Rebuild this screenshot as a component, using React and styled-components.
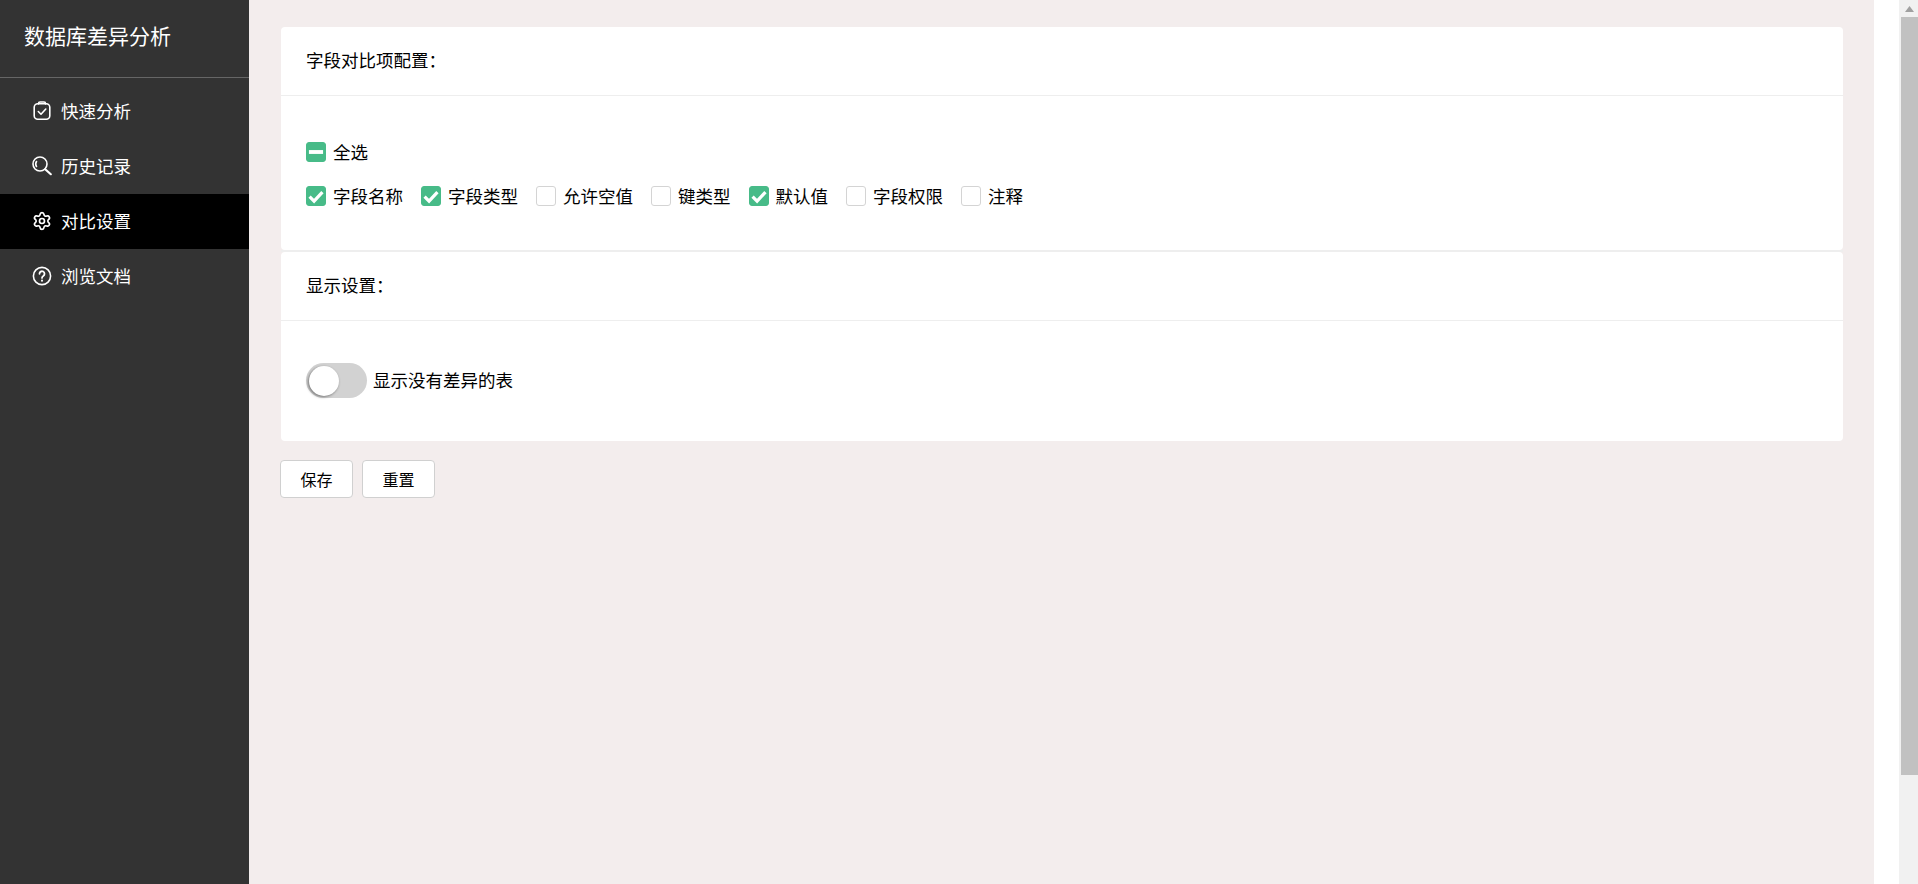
import React from 'react';
import styled, { createGlobalStyle } from 'styled-components';

const GlobalStyle = createGlobalStyle`
  html, body {
    margin: 0;
    height: 100%;
    overflow: hidden;
  }
  body {
    font-family: "Noto Sans CJK SC", "Liberation Sans", sans-serif;
    font-size: 17.5px;
    color: #000;
  }
`;

const Page = styled.div`
  display: flex;
  height: 884px;
  background: #fff;
`;

const Sidebar = styled.aside`
  width: 249px;
  flex-shrink: 0;
  background: #333;
  color: #fff;
`;

const Brand = styled.div`
  height: 78px;
  padding: 0 0 8px 24px;
  display: flex;
  align-items: center;
  font-size: 21px;
  border-bottom: 1px solid #666;
  margin-bottom: 6px;
  box-sizing: border-box;
`;

const NavItem = styled.div`
  height: 55px;
  box-sizing: border-box;
  padding: 0 0 2px 32px;
  display: flex;
  align-items: center;
  gap: 9px;
  background: ${(p) => (p.$active ? '#000' : 'transparent')};
  svg {
    width: 20px;
    height: 20px;
    flex-shrink: 0;
    fill: none;
    stroke: #fff;
    stroke-width: 1.6;
    stroke-linecap: round;
    stroke-linejoin: round;
  }
`;

const Main = styled.main`
  flex: 1;
  background: #f3eded;
  padding: 27px 31px 0 32px;
`;

const Card = styled.section`
  background: #fff;
  border-radius: 4px;
`;

const Gap = styled.div`
  height: 2px;
  background: #eee;
`;

const CardHead = styled.div`
  height: 69px;
  padding: 0 0 3px 25px;
  display: flex;
  align-items: center;
  border-bottom: 1px solid #eee;
  box-sizing: border-box;
`;

const CardBody = styled.div`
  padding: ${(p) => p.$padding};
`;

const CheckRow = styled.div`
  display: flex;
  align-items: center;
  gap: 18px;
  height: 20px;
  margin-bottom: ${(p) => p.$mb || 0}px;
`;

const CheckItem = styled.label`
  display: flex;
  align-items: center;
  gap: 7px;
`;

const LabelText = styled.span`
  margin-top: -2px;
`;

const Box = styled.span`
  width: 20px;
  height: 20px;
  box-sizing: border-box;
  border-radius: 3px;
  display: flex;
  align-items: center;
  justify-content: center;
  background: ${(p) => (p.$on ? '#47bb88' : '#fff')};
  border: 1px solid ${(p) => (p.$on ? '#47bb88' : '#d4d4d4')};
  svg {
    width: 18px;
    height: 18px;
    flex-shrink: 0;
  }
`;

const SwitchRow = styled.div`
  display: flex;
  align-items: center;
  gap: 6px;
`;

const Track = styled.span`
  position: relative;
  width: 61px;
  height: 35px;
  border-radius: 18px;
  background: #d2d2d2;
`;

const Knob = styled.span`
  position: absolute;
  left: 3px;
  top: 3px;
  width: 30px;
  height: 30px;
  border-radius: 50%;
  background: #fff;
  box-shadow: -1px 1px 3px rgba(0, 0, 0, 0.45);
`;

const Actions = styled.div`
  display: flex;
  gap: 9px;
  margin: 19px 0 0 -1px;
`;

const Button = styled.button`
  width: 73px;
  height: 38px;
  padding: 0;
  font: inherit;
  font-size: 16px;
  color: #000;
  background: #fff;
  border: 1px solid #d0d0d0;
  border-radius: 4px;
`;

const Gutter = styled.div`
  width: 25px;
  flex-shrink: 0;
`;

const Scrollbar = styled.div`
  width: 19px;
  flex-shrink: 0;
  background: #f1f1f1;
  display: flex;
  flex-direction: column;
  align-items: flex-end;
`;

const ScrollUp = styled.div`
  width: 100%;
  height: 17px;
  display: flex;
  align-items: center;
  justify-content: center;
  padding-left: 2px;
  box-sizing: border-box;
`;

const Thumb = styled.div`
  width: 17px;
  height: 758px;
  background: #c1c1c1;
`;

const ClipboardIcon = () => (
  <svg viewBox="0 0 20 20">
    <rect x="2.200" y="2.800" width="15.600" height="15.400" rx="3.500" />
    <path d="M6.500 3V2.500A1.500 1.500 0 0 1 8 1h4a1.500 1.500 0 0 1 1.500 1.500V3" />
    <path d="M6.300 10.500l2.700 2.700 4.800-5.200" />
  </svg>
);

const SearchIcon = () => (
  <svg viewBox="0 0 20 20">
    <circle cx="8" cy="8" r="7" />
    <path d="M13.200 13.200l5.600 5" strokeWidth="2.200" />
    <path d="M4.500 10.500a4.500 4.500 0 0 1 0-5" />
  </svg>
);

const GearIcon = () => (
  <svg viewBox="0 0 24 24">
    <path d="M9.670 4.140a2.340 2.340 0 0 1 4.660 0 2.340 2.340 0 0 0 3.320 1.910 2.340 2.340 0 0 1 2.330 4.040 2.340 2.340 0 0 0 0 3.820 2.340 2.340 0 0 1-2.330 4.040 2.340 2.340 0 0 0-3.320 1.910 2.340 2.340 0 0 1-4.660 0 2.340 2.340 0 0 0-3.320-1.910 2.340 2.340 0 0 1-2.330-4.040 2.340 2.340 0 0 0 0-3.820 2.340 2.340 0 0 1 2.330-4.040 2.340 2.340 0 0 0 3.320-1.910" strokeWidth="2" />
    <circle cx="12" cy="12" r="3" strokeWidth="2" />
  </svg>
);

const HelpIcon = () => (
  <svg viewBox="0 0 20 20">
    <circle cx="10" cy="10" r="8.600" />
    <path d="M7.500 7.800a2.500 2.500 0 1 1 3.800 2.100c-.9.600-1.300 1-1.300 2" strokeWidth="1.800" />
    <path d="M10 14.600v.1" strokeWidth="2" />
  </svg>
);

const CheckMark = () => (
  <svg viewBox="0 0 14 14">
    <path d="M2 7.500l3.500 3.500L12 4" fill="none" stroke="#fff" strokeWidth="2.500" />
  </svg>
);

const DashMark = () => (
  <svg viewBox="0 0 14 14">
    <rect x="1.500" y="5.500" width="11" height="3" fill="#fff" />
  </svg>
);

const navItems = [
  { label: '快速分析', Icon: ClipboardIcon },
  { label: '历史记录', Icon: SearchIcon },
  { label: '对比设置', Icon: GearIcon, active: true },
  { label: '浏览文档', Icon: HelpIcon },
];

const fields = [
  { label: '字段名称', on: true },
  { label: '字段类型', on: true },
  { label: '允许空值' },
  { label: '键类型' },
  { label: '默认值', on: true },
  { label: '字段权限' },
  { label: '注释' },
];

export default function App() {
  return (
    <Page>
      <GlobalStyle />
      <Sidebar>
        <Brand>数据库差异分析</Brand>
        {navItems.map(({ label, Icon, active }) => (
          <NavItem key={label} $active={active}>
            <Icon />
            {label}
          </NavItem>
        ))}
      </Sidebar>
      <Main>
        <Card>
          <CardHead>字段对比项配置：</CardHead>
          <CardBody $padding="46px 25px 44px">
            <CheckRow $mb={24}>
              <CheckItem>
                <Box $on>
                  <DashMark />
                </Box>
                <LabelText>全选</LabelText>
              </CheckItem>
            </CheckRow>
            <CheckRow>
              {fields.map((f) => (
                <CheckItem key={f.label}>
                  <Box $on={f.on}>{f.on && <CheckMark />}</Box>
                  <LabelText>{f.label}</LabelText>
                </CheckItem>
              ))}
            </CheckRow>
          </CardBody>
        </Card>
        <Gap />
        <Card>
          <CardHead>显示设置：</CardHead>
          <CardBody $padding="42px 25px 43px">
            <SwitchRow>
              <Track>
                <Knob />
              </Track>
              <LabelText>显示没有差异的表</LabelText>
            </SwitchRow>
          </CardBody>
        </Card>
        <Actions>
          <Button>保存</Button>
          <Button>重置</Button>
        </Actions>
      </Main>
      <Gutter />
      <Scrollbar>
        <ScrollUp>
          <svg width="9" height="6" viewBox="0 0 9 6">
            <path d="M4.500 0L9 6H0z" fill="#a0a0a0" />
          </svg>
        </ScrollUp>
        <Thumb />
      </Scrollbar>
    </Page>
  );
}
